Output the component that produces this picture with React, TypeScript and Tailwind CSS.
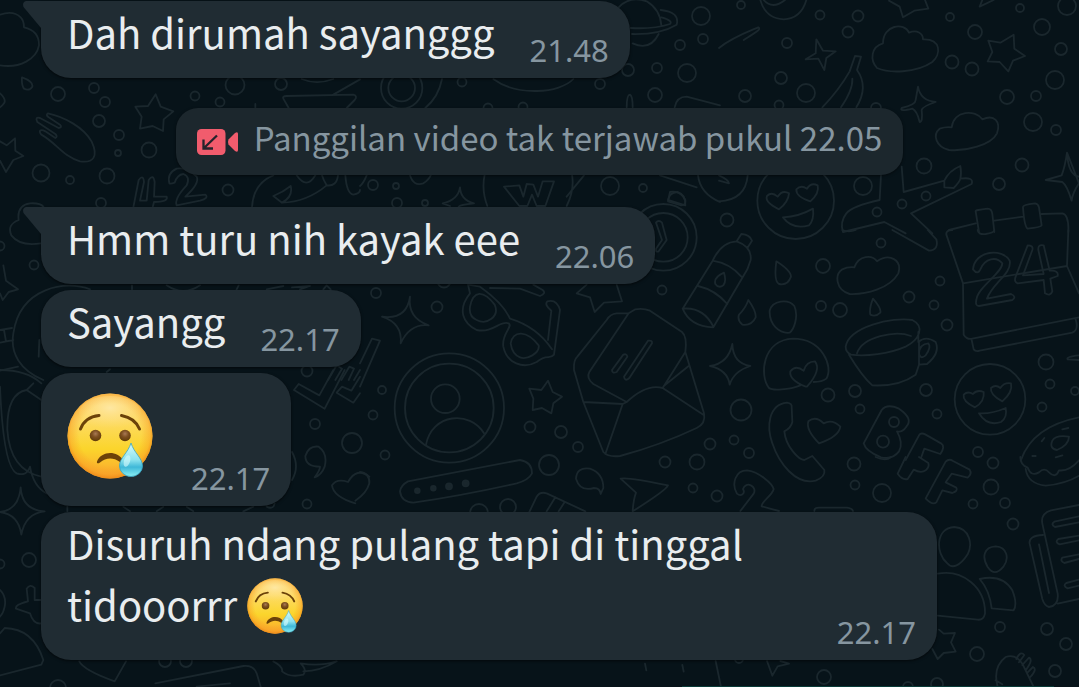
import type { ReactNode } from "react";

const DOTS: [number, number, number][] = [
  [58, 94, 7], [94, 88, 5], [105, 102, 5], [99, 121, 6], [119, 135, 5], [118, 153, 3],
  [149, 150, 7.5], [41, 173, 8.5], [70, 180, 4], [107, 176, 7.5], [101, 203, 5], [235, 85, 9.5],
  [281, 84, 6], [195, 96, 4.5], [220, 102, 4.5], [228, 190, 5.5], [462, 82, 4.5], [488, 108, 4.5],
  [523, 107, 4.5], [600, 84, 5], [628, 70, 6], [657, 68, 5], [687, 73, 9], [680, 45, 5],
  [703, 39, 5], [701, 16, 9], [655, 95, 7], [610, 186, 9], [643, 188, 4], [373, 185, 5],
  [396, 186, 3], [397, 203, 5], [425, 203, 3], [741, 5, 4], [820, 15, 4.5], [858, 16, 5.5],
  [848, 32, 5.5], [787, 43, 5], [781, 78, 6], [806, 93, 9], [745, 96, 6], [779, 105, 4.5],
  [876, 108, 5], [950, 17, 4], [975, 32, 7], [1020, 8, 4], [1067, 6, 9], [1042, 27, 8],
  [1061, 49, 6], [952, 62, 6.5], [972, 69, 6.5], [1055, 80, 9], [1007, 97, 7], [1036, 96, 5],
  [1033, 122, 9], [1056, 130, 5], [924, 166, 7.5], [1022, 165, 6.5], [999, 184, 6], [863, 186, 9],
  [926, 196, 4.5], [902, 204, 4.5], [877, 212, 4.5], [727, 220, 6.5], [881, 243, 4.5], [823, 266, 7],
  [940, 281, 4.5], [909, 297, 5.5], [934, 305, 4.5], [947, 325, 5.5], [821, 306, 5], [840, 310, 7],
  [1046, 362, 7.5], [1050, 384, 4.5], [1075, 391, 4], [1042, 407, 4.5], [926, 390, 6], [937, 414, 4.5],
  [855, 391, 6], [828, 395, 6.5], [860, 409, 4.5], [741, 410, 10.5], [734, 440, 4.5], [749, 453, 5],
  [978, 452, 5], [854, 464, 6.5], [855, 485, 4.5], [882, 493, 9], [993, 463, 5.5], [991, 487, 7.5],
  [1005, 503, 5], [973, 504, 4.5], [1013, 524, 5.5], [1000, 627, 5], [1047, 629, 6], [1066, 644, 6],
  [1055, 671, 6], [977, 654, 7], [824, 677, 7], [937, 684, 6], [908, 687, 5], [739, 659, 4],
  [376, 293, 5], [437, 307, 5.5], [444, 281, 6.5], [382, 390, 4], [373, 415, 4.5], [385, 455, 4.5],
  [530, 427, 5.5], [561, 432, 6], [578, 447, 5], [549, 465, 10], [662, 290, 4.5], [710, 444, 5.5],
  [697, 462, 7.5], [665, 462, 5.5], [693, 488, 4.5], [717, 496, 5.5], [479, 513, 9], [508, 507, 8],
  [34, 265, 4.5], [0, 246, 4.5], [307, 371, 5.5], [315, 424, 5], [352, 443, 10],
  [307, 504, 4.5], [29, 560, 7], [0, 564, 4.5], [165, 661, 6], [186, 661, 6], [58, 688, 8],
];

// Each sheet is drawn at three times its final size, then placed at (x, y).
function Sheet({ x, y, children }: { x: number; y: number; children: ReactNode }) {
  return <g transform={`translate(${x} ${y}) scale(${1 / 3})`}>{children}</g>;
}

function Wallpaper() {
  return (
    <svg
      aria-hidden="true"
      className="absolute inset-0 h-full w-full"
      viewBox="0 0 1079 687"
      preserveAspectRatio="xMinYMin slice"
      fill="none"
      stroke="#1a272d"
      strokeWidth="1.8"
      strokeLinecap="round"
      strokeLinejoin="round"
    >
      {DOTS.map(([cx, cy, r]) => (
        <circle key={`${cx}-${cy}`} cx={cx} cy={cy} r={r} />
      ))}

      <g strokeWidth="5.5">
        <Sheet x={0} y={0}>
          <path d="M0 44Q40 30 62 52 72 62 72 82 118 92 117 136C110 176 60 206 0 196" />
          <path d="M66 232Q100 244 97 260 88 274 72 266 64 256 66 232ZM0 280Q20 298 12 310 8 316 0 322" />
          <path d="M467 283 482 320 520 334 491 358 489 393 458 378 420 386 425 350 406 320 444 318Z" />
          <path d="M0 424 20 436 45 415 46 452 70 468 40 480 18 516 0 482" />
          <path d="M144 340C190 350 250 380 275 425 296 470 280 490 240 484 190 470 170 430 124 404 114 392 122 386 136 394L166 414Q174 410 166 402L112 366Q104 350 120 354L176 384Q188 382 180 374L146 352Q136 344 144 340Z" />
          <path d="M850 296Q846 288 860 288L1060 284Q1074 288 1064 300L1040 324M850 296 866 324M1000 284 1080 238M905 237Q950 256 1000 237M766 324V312" />
          <path d="M400 622 416 540Q430 522 432 546L420 602H440L446 540Q460 520 464 546L462 590H500Q506 606 462 606L458 622M508 550Q500 520 530 506 560 500 590 530 600 550 556 590L616 584Q628 594 600 602L530 616Q522 596 560 556 572 530 550 522 532 524 524 548 512 552 508 550Z" />
          <path d="M756 622Q760 550 820 526M846 608Q880 590 872 558 850 576 820 588L846 608Q920 606 980 556 970 540 966 526M980 556Q1010 560 1014 526M1036 526Q1040 580 1060 584 1080 580 1080 570M890 526Q920 570 946 526" />
        </Sheet>

        <Sheet x={360} y={0}>
          <circle cx="125" cy="264" r="62" />
          <circle cx="125" cy="264" r="40" />
          <path d="M246 237Q236 290 196 324M400 237C470 290 600 280 640 237" />
          <path d="M776 22Q810 -14 860 4 900 28 904 76M812 84Q880 88 930 72 940 62 904 52M816 102Q900 104 950 74 960 36 902 30M818 130Q870 154 896 102" />
          <path d="M800 322Q800 284 810 284 818 288 818 322M944 322Q950 290 980 290L1080 316" />
          <path d="M374 524Q364 570 382 618M636 524Q644 570 620 618M672 526 620 590M432 560 478 556 490 590 500 552 520 554 534 590 548 544 582 544 556 618H530L516 584 502 618H478ZM300 562Q302 600 342 610 300 614 296 620M300 562Q294 600 248 610L270 618" />
          <path d="M20 526Q10 550 0 558M150 526Q160 560 190 550 206 540 212 526M900 526 1010 562M930 576Q960 570 976 600 978 616 964 616L924 604ZM1014 526Q1020 580 1080 606" />
        </Sheet>

        <Sheet x={719} y={0}>
          <path d="M124 0Q140 56 194 58 246 56 262 0M134 0Q160 30 198 0M510 2 542 20 552 52 586 32 628 26 618 0M790 0 782 20 824 0" />
          <path d="M0 144C40 112 90 94 118 82 126 88 118 92 74 120 74 130 84 130L140 96Q156 98 148 108L92 142Q78 156 92 162L132 138Q144 138 138 148L70 190Q40 224 20 230C-30 238 -30 170 0 144Z" />
          <path d="M292 118 312 152 350 154 322 174 316 210 298 176 260 178 290 160Z" />
          <path d="M310 322Q360 270 392 214L408 168 426 170 414 210Q450 260 412 322M400 236Q402 270 366 322" />
          <path d="M492 130C492 74 556 66 570 98 594 88 612 100 612 118C668 116 666 164 640 186 590 220 510 220 474 204 452 180 456 140 492 130Z" />
          <path d="M884 104 886 146 918 168 882 182 868 214 842 186 806 184 820 156 808 122 844 128Z" />
          <path d="M597 260Q604 302 650 306 612 318 608 330 612 366 602 366 594 332 580 326 540 336 548 324 590 314 590 300Z" />
          <path d="M698 382C704 330 770 328 790 358 826 342 846 364 834 400 816 436 740 454 690 450 650 440 640 404 662 386Q680 380 698 382Z" />
          <path d="M1044 458Q1048 526 1080 530M1080 550Q1060 580 1058 602 1044 556 1030 546L980 540 1028 526Q1038 500 1044 458Z" />
          <circle cx="230" cy="602" r="115" />
          <path d="M180 628Q136 606 144 588 158 574 176 590 190 568 210 580 208 606 180 628ZM274 604Q230 590 232 568 246 554 264 566 276 546 296 556 302 580 274 604ZM192 652Q240 650 282 626 286 660 270 676 220 690 192 652Z" />
          <path d="M0 526Q30 540 30 550L0 542M0 604Q80 600 86 526" />
          <path d="M486 524 482 600Q400 618 382 640 362 666 372 696L496 666 560 700M548 500 554 576 676 542Q690 512 724 498 728 520 724 536 766 530 758 552L576 640 640 700M676 542V562L704 564Q722 546 724 536" />
          <path d="M770 634Q768 630 806 626 818 626 820 642L826 696M770 634 780 696M912 622Q910 614 948 610 958 612 960 622L968 676Q966 682 926 686 916 680 912 622ZM826 662 912 650M968 642 1030 640Q1050 644 1048 696M690 690 770 670" />
        </Sheet>

        <Sheet x={719} y={230}>
          <path d="M370 0Q390 8 410 0M520 0 630 62Q660 60 652 28L626 0" />
          <path d="M172 94Q216 122 216 140 206 168 180 162 164 154 172 94ZM88 210Q112 244 110 262 98 288 70 284 54 270 60 254 80 234 88 210ZM462 206Q488 236 484 248 470 262 454 254 450 236 462 206Z" />
          <path d="M406 112C420 74 460 74 474 94 512 68 550 90 538 130 512 176 440 194 392 192 350 180 346 134 370 118Q386 110 406 112ZM152 242C160 210 208 206 226 228 240 260 224 300 212 308 182 312 150 284 152 242Z" />
          <path d="M40 342Q42 400 94 408 44 424 32 464 26 420 -27 408 28 400 40 342Z" />
          <path d="M260 470Q210 450 214 424 230 404 254 422 262 394 288 394 308 420 264 470ZM244 466C210 480 160 482 150 474 120 436 130 330 222 326 310 326 344 410 322 446Q310 456 284 456" />
          <path d="M380 350C390 290 520 260 580 270 620 290 600 330 560 350 510 372 440 380 396 374Q380 366 380 350ZM414 370C430 320 530 300 576 318M390 374Q430 440 460 466 540 470 590 434L600 404V336M598 306V336Q620 316 650 336 664 370 624 402L600 404M600 370Q602 342 628 340 638 350 620 376 604 390 600 370Z" />
          <path d="M1048 0 1044 108 732 160 682 14Q680 0 700 0M732 160 734 314Q744 330 760 326L1080 262M1044 108 1080 190M758 330 764 358Q770 366 782 362L1060 308Q1080 300 1070 268M776 0Q776 14 800 12 826 8 826 0" />
          <path d="M762 118C768 60 850 54 872 92 880 130 820 160 804 206L876 192Q894 200 880 210L780 228Q768 228 772 210C776 170 850 130 850 100 832 78 798 84 784 118Q776 136 762 118ZM926 46Q944 46 940 60L912 136 974 132 958 60Q956 42 974 46L992 122Q1020 120 1016 138L994 146 1000 184Q994 200 978 190L974 150 896 160Q884 156 890 140Z" />
          <circle cx="813" cy="508" r="106" />
          <path d="M768 532Q730 514 734 494 746 482 762 492 774 478 794 486 798 514 768 532ZM850 514Q812 494 816 474 830 462 844 474 856 456 876 460 882 486 850 514ZM780 550Q820 552 860 534 866 562 846 576 804 590 780 550Z" />
          <path d="M300 640Q260 600 268 574 290 556 314 580 340 566 364 590 360 620 300 640Z" />
          <path d="M204 518Q220 520 218 532L220 576Q216 594 196 604C200 650 240 690 256 690L280 678 316 720Q320 740 290 752C230 766 180 700 160 640 142 590 148 524 204 518Z" />
          <path d="M434 640 488 540Q504 520 540 536 584 566 562 590 550 608 534 604 554 640 540 664 520 690 486 682 440 664 434 640ZM560 690 600 616Q606 606 620 614L666 640Q680 650 664 672L616 656 606 684" />
          <circle cx="525" cy="576" r="15" />
          <circle cx="492" cy="635" r="18" />
          <path d="M906 690Q940 590 1080 562M1000 632Q1010 614 1050 620 1050 644 1014 660 990 656 1000 632ZM1030 598 1048 594M968 634 976 624M940 678H950M1010 682 1030 676M1080 376Q1040 380 1046 388L1080 390" />
        </Sheet>

        <Sheet x={719} y={457}>
          <path d="M470 0Q500 14 516 0M64 162 104 110C116 88 80 70 72 96 80 110 66 120 54 110 36 80 50 40 84 40 120 44 160 80 164 96 160 116 126 134 128 148L180 162M286 162Q286 152 300 152H384Q400 154 402 162" />
          <path d="M560 0 536 50Q550 70 566 66L584 38Q606 50 620 40 632 30 628 18L600 0M620 124 680 14Q690 4 702 12L752 38Q760 50 746 62L698 50 680 76 712 92Q718 102 700 108L670 100 652 136Q640 146 620 124Z" />
          <path d="M904 0Q904 24 926 32 936 60 960 46 976 30 990 46 1010 66 1020 40 1050 44 1080 10M920 36Q926 80 980 86 1040 80 1080 56" />
          <path d="M706 210C756 214 760 266 746 292 724 326 700 338 684 318 650 290 648 214 706 210ZM656 350C730 336 800 390 798 470Q794 490 776 488L656 476M830 268C866 270 870 306 854 328 834 352 820 350 806 330 788 300 794 270 830 268ZM782 366Q850 350 880 400 896 440 884 460L818 454Q812 400 782 366Z" />
          <path d="M1080 144 996 160Q964 170 970 200L1016 410Q1020 446 990 450 976 446 970 426L932 260Q928 236 972 234M960 262 990 408M1016 440 1080 426M1080 178 1006 194Q994 202 1008 210L1080 196M1080 236 1018 246Q1006 256 1022 262L1080 250M1080 292 1030 302Q1022 312 1036 318L1080 306M1080 368 1042 378Q1030 386 1046 394L1080 386" />
          <path d="M640 576 656 606 674 588 710 584 696 556 708 528 674 530 660 518M160 656 176 628 210 620 184 612M160 656 144 612M836 690Q820 630 860 600 890 590 910 620L944 690M892 606Q904 580 916 594L900 616M910 624 930 602Q944 608 920 640M926 646 942 630Q956 636 934 660M830 670 850 682M-10 612 6 690M-110 624-106 644M-222 620-218 640" />
        </Sheet>

        <Sheet x={360} y={260}>
          <path d="M150 110Q142 174 206 196 150 190 122 250 128 190 66 170 140 180 150 110Z" />
          <circle cx="268" cy="444" r="164" />
          <circle cx="268" cy="444" r="133" />
          <circle cx="256" cy="416" r="43" />
          <path d="M198 554C216 460 330 450 372 520" />
          <path d="M324 74 330 100C290 150 310 190 350 210 400 220 420 180 446 190 460 200 424 220 430 260 440 310 490 328 530 306 560 280 570 300 582 284L600 150Q590 116 562 124 552 134 574 152L564 240M324 74 360 80Q430 130 450 176 530 200 576 268M330 140C340 90 370 90 404 134 420 170 380 196 350 180Q326 170 330 140ZM452 250C460 210 500 210 536 256 540 280 500 300 480 292Q456 282 452 250ZM390 84 480 86 540 108Q560 100 548 90L520 74" />
          <path d="M564 362 578 396 606 410 580 430 574 460 546 444 518 450 520 416 508 386 544 390ZM650 100 690 112 704 156 732 128 786 124 770 74M650 100 680 74" />
          <path d="M806 160 826 148Q850 144 870 152L966 216Q982 230 976 276L908 384Q860 370 800 426L700 372Q678 354 688 336ZM806 160H770Q750 162 740 180L652 290Q640 300 642 330L670 426 730 576Q744 592 780 588 900 556 1010 504 1038 490 1032 460L976 276M670 426 788 432 736 582M800 426 788 432M908 384 1030 464M914 376 986 318M756 330 790 284Q800 280 802 290L770 336Q756 342 756 330ZM792 350 864 242Q878 240 876 250L808 354Q794 366 792 350Z" />
          <path d="M144 664 480 600Q516 606 516 640 506 660 470 670 310 706 160 728 124 726 120 694 122 676 144 664ZM702 684Q660 696 648 656 650 620 690 626 730 640 730 684L722 702Q720 684 702 684ZM782 656Q800 650 924 676 920 690 818 754 820 720 828 698ZM508 756 530 710Q540 694 560 700L676 754M560 754 586 712M596 754 614 726" />
          <g fill="#1a272d">
            <circle cx="172" cy="692" r="7" />
            <circle cx="220" cy="685" r="7" />
            <circle cx="267" cy="679" r="9" />
            <circle cx="317" cy="670" r="9" />
          </g>
          <path d="M0 310 36 236 60 242 0 380M0 636Q30 640 28 670 20 700 -14 722M0 170V240" />
        </Sheet>

        <Sheet x={640} y={180}>
          <circle cx="70" cy="172" r="100" />
          <circle cx="70" cy="172" r="73" />
          <path d="M84 60Q88 38 112 36 138 44 136 76ZM48 128Q56 118 66 128L80 180 56 214Q46 218 48 206L66 180Z" />
          <path d="M128 386 218 242Q244 186 290 184 336 200 332 240L322 268 220 442Q150 440 128 386ZM218 242Q270 250 304 290M174 318Q226 330 262 372M128 386Q190 380 220 440M290 184 304 162Q330 164 336 182L322 204M252 278Q260 304 250 316 236 326 226 312 220 292 252 278Z" />
        </Sheet>

        <Sheet x={0} y={200}>
          <path d="M56 60Q50 16 90 10 120 8 130 20M56 60Q20 74 34 106 60 140 122 130M10 196 18 242 54 268 26 276 8 300 0 280M270 268C200 240 60 260 40 400 30 460 60 510 130 540M0 390 36 384M0 428 40 420M12 390 18 424M0 512 54 500M118 420 116 470M396 256V268M500 256Q550 290 600 256M710 268 716 256M800 268 850 258M876 262 930 258 900 268M970 268 980 256 992 268" />
          <path d="M984 540 1010 496 1026 506 1006 540M1024 540 1048 500 1062 506 1046 540M1062 540 1080 510M320 516 330 508" />
        </Sheet>

        <Sheet x={0} y={370}>
          <path d="M0 0Q80 0 124 40M80 60Q20 70 22 180 30 300 124 320M100 40 80 60 124 90M0 50Q10 290 50 310 80 320 90 290 100 350 140 370M62 352Q66 420 134 424 76 430 64 494 56 434 0 426 56 420 62 352Z" />
          <path d="M882 60 896 42 958 76 1000 0M882 60 974 116 1034 0M1010 68 1026 50 1054 62 1080 20M1010 68 1060 98 1080 70" />
          <path d="M960 290Q916 290 916 258 926 226 956 230 984 250 974 290 964 316 944 322 960 300 960 290ZM1108 320Q1070 290 1044 336 1010 324 996 346 1000 380 1066 400M876 246Q900 290 876 330M370 410 390 424M470 424 490 410M560 410 580 424M730 424 760 410M800 410Q820 420 824 400M202 410V424" />
          <path d="M48 716Q44 704 84 694L80 656Q90 640 104 654V690H124M48 716 90 730Q100 764 124 760M0 660Q20 680 14 710 10 730 0 740M0 790 14 774Q100 776 130 870L124 884 0 916M238 874Q250 900 344 934L378 874M466 940 730 888Q760 884 770 910L782 950M590 950 690 940M820 874Q850 890 846 904 870 924 910 914 922 900 902 880 960 890 1008 874M910 904Q960 904 1010 874" />
        </Sheet>
      </g>
    </svg>
  );
}

function CryingFace({ id, className }: { id: string; className: string }) {
  return (
    <svg role="img" aria-label="Wajah menangis" viewBox="0 0 86 86" className={className}>
      <defs>
        <linearGradient id={`${id}-skin`} x1="0" y1="0" x2="0" y2="1">
          <stop offset="0" stopColor="#fdd36c" />
          <stop offset="0.3" stopColor="#fddb68" />
          <stop offset="0.65" stopColor="#fbd52c" />
          <stop offset="1" stopColor="#fba52e" />
        </linearGradient>
        <radialGradient id={`${id}-edge`} cx="0.5" cy="0.48" r="0.52">
          <stop offset="0.7" stopColor="#f89a22" stopOpacity="0" />
          <stop offset="0.9" stopColor="#f89a22" stopOpacity="0.45" />
          <stop offset="1" stopColor="#ee8a18" stopOpacity="0.95" />
        </radialGradient>
        <radialGradient id={`${id}-shine`} cx="0.5" cy="0.35" r="0.6">
          <stop offset="0" stopColor="#ffedb5" stopOpacity="0.75" />
          <stop offset="1" stopColor="#ffe28a" stopOpacity="0" />
        </radialGradient>
        <radialGradient id={`${id}-eye`} cx="0.5" cy="0.35" r="0.6">
          <stop offset="0" stopColor="#a87955" />
          <stop offset="0.5" stopColor="#7d4f20" />
          <stop offset="1" stopColor="#633d0b" />
        </radialGradient>
        <linearGradient id={`${id}-tear`} x1="0" y1="0" x2="0" y2="1">
          <stop offset="0" stopColor="#d9fbfb" />
          <stop offset="0.5" stopColor="#8de3ee" />
          <stop offset="0.72" stopColor="#3fb8d8" />
          <stop offset="1" stopColor="#8af0f4" />
        </linearGradient>
      </defs>
      <circle cx="43" cy="43" r="42.5" fill={`url(#${id}-skin)`} />
      <circle cx="43" cy="43" r="42.5" fill={`url(#${id}-edge)`} />
      <ellipse cx="43" cy="20" rx="31" ry="17" fill={`url(#${id}-shine)`} />
      <path d="M13.5 36Q18 24 32 22.5M54.5 22.5Q68 25 72.5 36" fill="none" stroke="#6b4209" strokeWidth="3" strokeLinecap="round" />
      <circle cx="28.5" cy="42.5" r="5.8" fill={`url(#${id}-eye)`} />
      <circle cx="58" cy="42.5" r="5.8" fill={`url(#${id}-eye)`} />
      <path d="M30 68.5C34 58 50 57 56 67 57 70 55 71 53 69 46 64 39 64.5 33 69.5 31 71 29.5 70.5 30 68.5Z" fill="#6b4209" />
      <path d="M64 50C67 60 75.5 65 75.5 73A11.5 10.5 0 0 1 52.5 73C52.5 65 61 60 64 50Z" fill={`url(#${id}-tear)`} stroke="#39a5c4" strokeWidth="0.8" />
      <ellipse cx="60" cy="68" rx="3" ry="6" fill="#d8fbfd" opacity="0.6" transform="rotate(18 60 68)" />
    </svg>
  );
}

function MissedVideoIcon() {
  return (
    <svg aria-hidden="true" viewBox="0 0 42 26" className="h-[26px] w-[42px] shrink-0">
      <rect width="28.5" height="26" rx="4.5" fill="#f15c6d" />
      <path d="M31.5 10.5 38 4Q41 2 41 5V21Q41 24 38 22L31.5 15.5Q30.5 13 31.5 10.5Z" fill="#f15c6d" />
      <path d="M20 6.5 7 19M6.5 10.5V19.5H16" fill="none" stroke="#24232c" strokeWidth="2.3" />
    </svg>
  );
}

type BubbleProps = { time: string; tail?: boolean; wide?: boolean; children: ReactNode };

function Bubble({ time, tail = false, wide = false, children }: BubbleProps) {
  return (
    <article
      className={`relative flex items-end justify-between gap-[35px] rounded-[30px] bg-[#202c33] pr-[21px] pb-[10px] pl-[26px] shadow-[0_1px_3px_rgba(0,0,0,0.6)] ${tail ? "rounded-tl-none" : ""} ${wide ? "w-full max-w-[896px]" : "w-fit"}`}
    >
      {tail && (
        <svg aria-hidden="true" viewBox="0 0 19 27" className="absolute top-0 -left-[18px] h-[27px] w-[19px]">
          <path d="M19 0H3Q-1 1 .5 6L18 27H19Z" fill="#202c33" />
        </svg>
      )}
      {children}
      <time className="shrink-0 font-['Noto_Sans','Open_Sans',sans-serif] text-[31px] leading-9 text-[#8696a0]">
        {time}
      </time>
    </article>
  );
}

export default function App() {
  return (
    <main className="relative min-h-screen overflow-hidden bg-[#071319] font-['Noto_Sans_CJK_SC','Noto_Sans',sans-serif] text-[40px] leading-[61px] text-[#e9edef]">
      <Wallpaper />
      <section aria-label="Percakapan" className="relative flex flex-col gap-[6px] pt-px pl-[41px]">
        <Bubble time="21.48" tail>
          <p className="pt-px pb-[5px]">Dah dirumah sayanggg</p>
        </Bubble>

        <button
          type="button"
          className="mt-6 mb-[26px] -ml-[41px] flex h-[67px] w-fit items-center gap-[15px] self-center rounded-[22px] bg-[#1c272d] px-[21px] text-[33px] leading-[48px] text-[#8696a0] shadow-[0_1px_3px_rgba(0,0,0,0.5)]"
        >
          <MissedVideoIcon />
          <span className="pb-[10px]">Panggilan video tak terjawab pukul 22.05</span>
        </button>

        <Bubble time="22.06" tail>
          <p className="pt-px pb-[5px]">Hmm turu nih kayak eee</p>
        </Bubble>
        <Bubble time="22.17">
          <p className="pt-px pb-[5px]">Sayangg</p>
        </Bubble>
        <Bubble time="22.17">
          <p className="pt-5 pr-[3px] pb-[17px]">
            <CryingFace id="big" className="h-[86px] w-[86px]" />
          </p>
        </Bubble>
        <Bubble time="22.17" wide>
          <p className="pt-px pb-[15px]">
            Disuruh ndang pulang tapi di tinggal tidooorrr{" "}
            <CryingFace id="small" className="mx-px inline h-14 w-14 align-[-13px]" />
          </p>
        </Bubble>
        <div className="-mb-px mt-5 mr-[25px] h-px w-[372px] self-end bg-[#0a3b38]" />
      </section>
    </main>
  );
}
